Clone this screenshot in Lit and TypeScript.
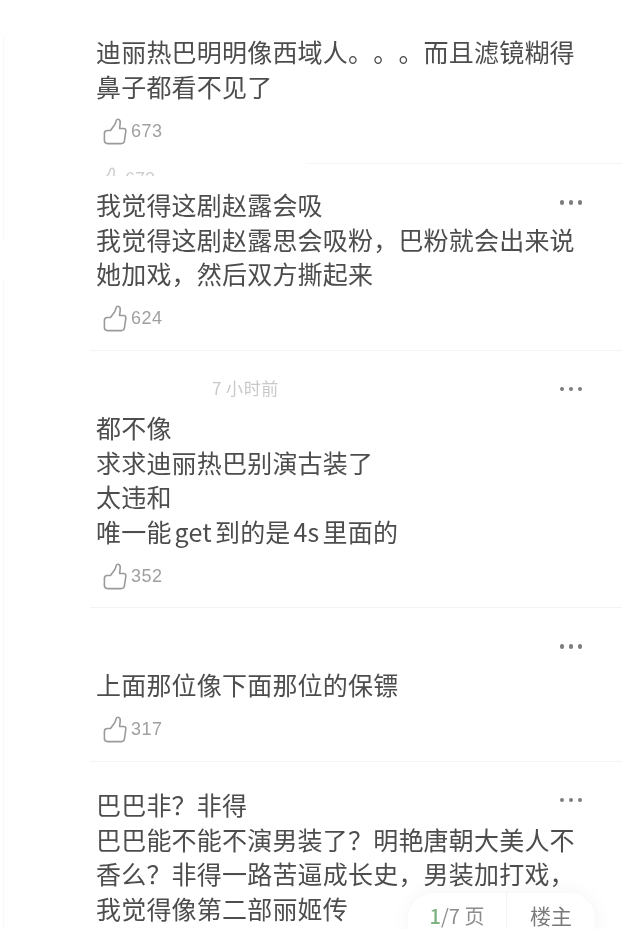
import { LitElement, html, css } from "lit";
import { customElement } from "lit/decorators.js";

const thumb = html`<svg class="thumb" viewBox="0 0 24 27" fill="none" stroke="currentColor" stroke-width="1.6" stroke-linejoin="round">
  <path d="M7.5 12.5 L11.5 7 Q12.8 5 13 3.2 Q13.3 1.2 15 1.3 Q17.6 1.6 17.2 5.2 L16.6 10.5 H20.6 Q23.3 10.5 22.8 13.4 L21.4 23 Q21 25.6 18.2 25.6 H4.6 Q1.4 25.6 1.4 22.6 V15.4 Q1.4 12.5 4.4 12.5 Z"/>
</svg>`;

const dots = html`<div class="dots"><i></i><i></i><i></i></div>`;
const like = (n: string) => html`<div class="like">${thumb}<span>${n}</span></div>`;

@customElement("app-root")
export class AppRoot extends LitElement {
  static styles = css`
    :host { display: block; width: 640px; height: 948px; background: #fff; overflow: hidden;
      font-family: "Noto Sans CJK SC", "Liberation Sans", sans-serif; }
    .frame { position: relative; height: 929px; overflow: hidden; background: #fff; filter: blur(0.45px); }
    .edge { position: absolute; left: 3px; top: 35px; width: 1px; height: 205px; background: #f8f8f8; }
    .edge.low { top: 280px; height: 649px; }
    .comment { position: relative; margin-left: 90px; width: 532px; padding-left: 6px; box-sizing: border-box; }
    .sep { border-bottom: 1px solid #f4f4f4; }
    .c1 { padding-top: 34px; padding-bottom: 19px;
      border-image: linear-gradient(90deg, transparent 0, transparent 40%, #f4f4f4 42%) 1; }
    .c2 { padding-top: 23px; padding-bottom: 18px; }
    .c3 { padding-top: 27px; padding-bottom: 18px; }
    .c4 { padding-top: 59px; padding-bottom: 18px; }
    .c5 { padding-top: 25px; }
    .text { margin: 0; font-size: 25px; letter-spacing: 0.2px; line-height: 34.6px; color: #4d4d4d; white-space: nowrap;
      text-spacing-trim: space-all; font-feature-settings: "chws" 0; }
    .latin { margin: 0 3px; }
    .like { display: flex; align-items: center; gap: 4px; height: 26px; margin-top: 15px; margin-left: 7px; color: #9a9a9a; }
    .thumb { width: 24px; height: 27px; flex: none; }
    .like span { font: 18px "Liberation Sans", sans-serif; color: #a0a0a0; letter-spacing: 0.5px; }
    .ghost { position: absolute; left: 7px; top: 0; height: 12px; overflow: hidden; display: flex; gap: 4px; color: #bdbdbd; opacity: 0.7; }
    .ghost .thumb { margin-top: 3px; }
    .ghost span { font: 18px "Liberation Sans", sans-serif; line-height: 30px; }
    .dots { position: absolute; right: 40px; top: 36px; display: flex; gap: 4.5px; }
    .dots i { display: block; width: 4.5px; height: 4.5px; border-radius: 50%; background: #7d7d7d; }
    .meta { height: 20px; margin-bottom: 12px; padding-left: 116px; font-size: 17px; line-height: 20px; color: #c9c9c9;
      letter-spacing: 0.6px; }
    .meta span { margin-right: 4px; }
    .pill { position: absolute; left: 408px; top: 893px; width: 187px; height: 60px; border-radius: 26px; background: #fff;
      box-shadow: 0 0 20px rgba(0,0,0,0.05); display: flex; }
    .pill div { height: 44px; display: flex; align-items: center; justify-content: center; }
    .page { width: 98px; font-size: 20px; color: #8c8c8c; border-right: 1px solid #f3f3f3; }
    .page b { font-weight: 500; color: #7fb283; }
    .owner { flex: 1; font-size: 21px; color: #7a7a7a; }
  `;

  render() {
    return html`<div class="frame">
      <div class="edge"></div><div class="edge low"></div>
      <section class="comment sep c1">
        <p class="text">迪丽热巴明明像西域人。。。而且滤镜糊得<br />鼻子都看不见了</p>
        ${like("673")}
      </section>
      <section class="comment sep c2">
        <div class="ghost">${thumb}<span>673</span></div>
        ${dots}
        <p class="text">我觉得这剧赵露会吸<br />我觉得这剧赵露思会吸粉，巴粉就会出来说<br />她加戏，然后双方撕起来</p>
        ${like("624")}
      </section>
      <section class="comment sep c3">
        ${dots}
        <div class="meta"><span>7</span>小时前</div>
        <p class="text">都不像<br />求求迪丽热巴别演古装了<br />太违和<br />唯一能<span class="latin">get</span>到的是<span class="latin">4s</span>里面的</p>
        ${like("352")}
      </section>
      <section class="comment sep c4">
        ${dots}
        <p class="text">上面那位像下面那位的保镖</p>
        ${like("317")}
      </section>
      <section class="comment c5">
        ${dots}
        <p class="text">巴巴非？非得<br />巴巴能不能不演男装了？明艳唐朝大美人不<br />香么？非得一路苦逼成长史，男装加打戏，<br />我觉得像第二部丽姬传</p>
      </section>
      <div class="pill">
        <div class="page"><b>1</b>/7 页</div>
        <div class="owner">楼主</div>
      </div>
    </div>`;
  }
}
